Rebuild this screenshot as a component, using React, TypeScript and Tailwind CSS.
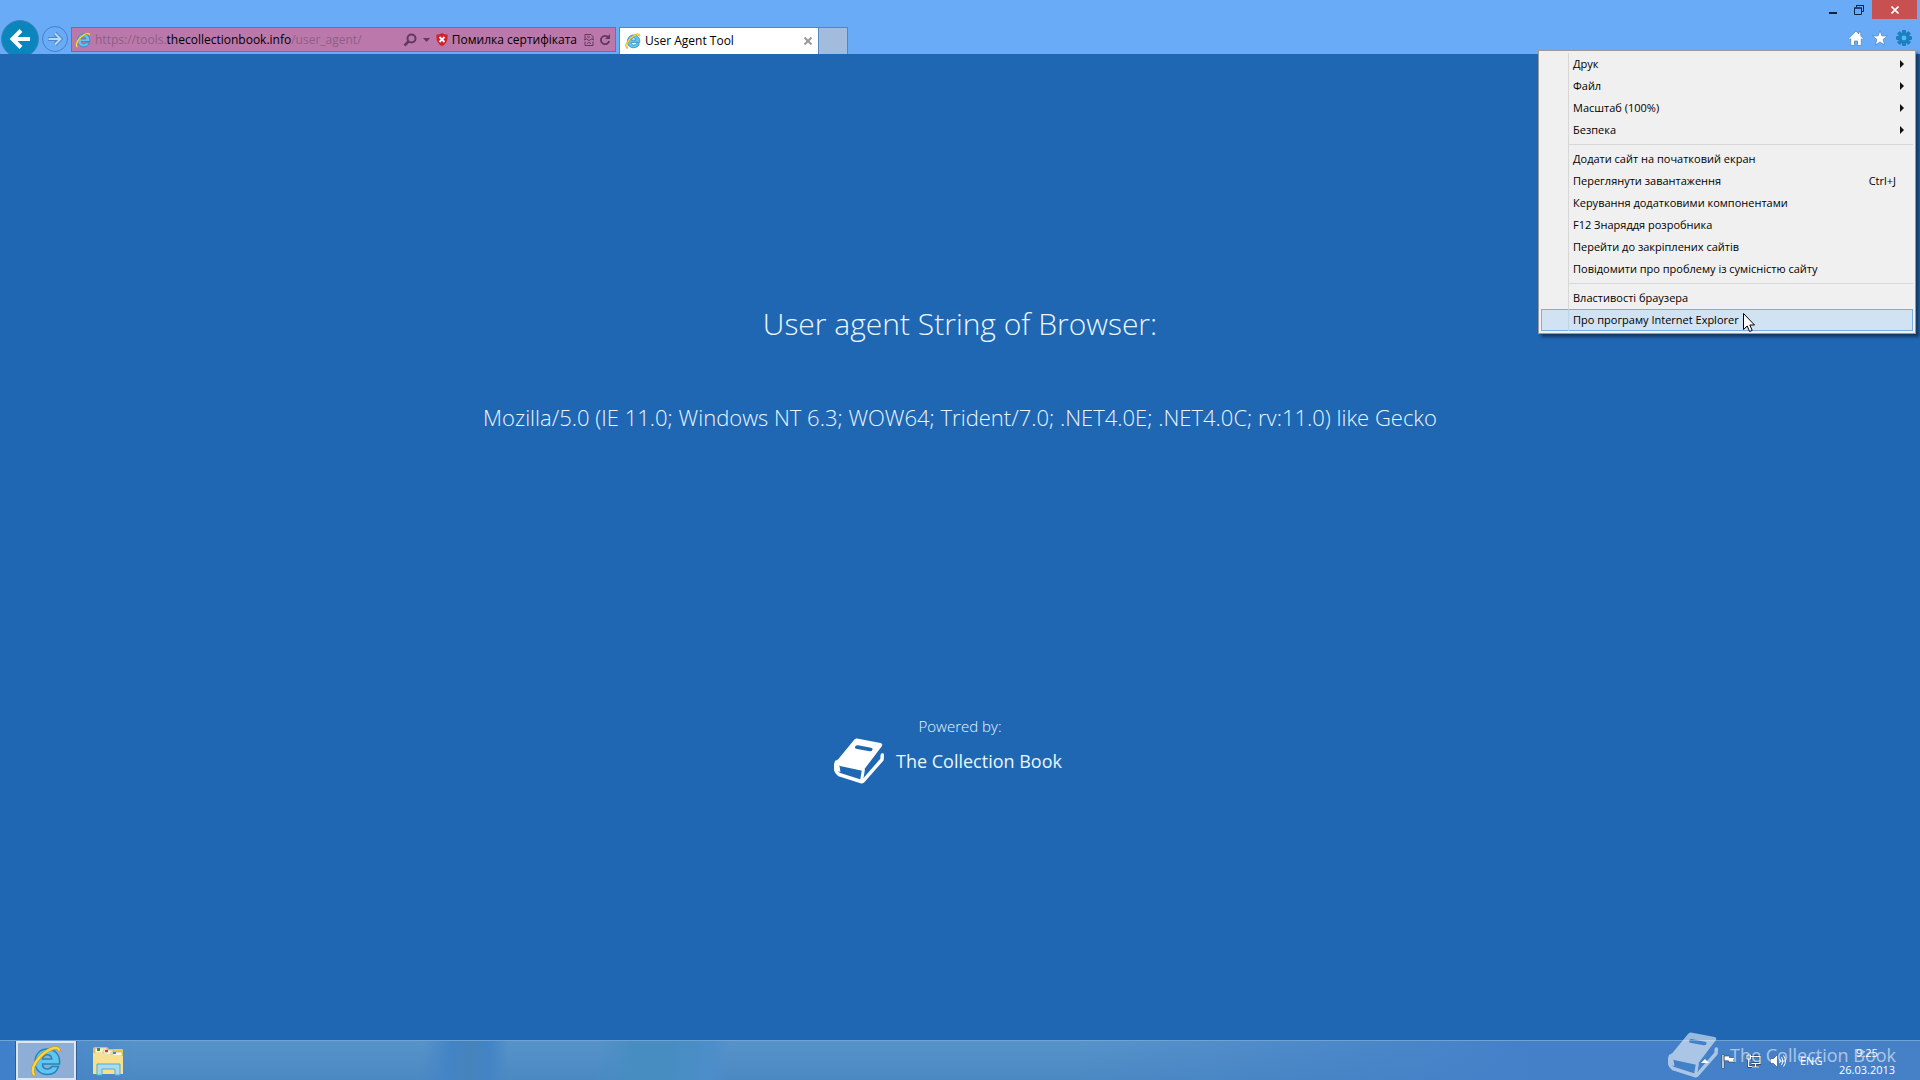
import React, { useState } from "react";

type MenuItem = { label: string; hint?: string; submenu?: boolean };

const menuGroups: MenuItem[][] = [
  [
    { label: "Друк", submenu: true },
    { label: "Файл", submenu: true },
    { label: "Масштаб (100%)", submenu: true },
    { label: "Безпека", submenu: true },
  ],
  [
    { label: "Додати сайт на початковий екран" },
    { label: "Переглянути завантаження", hint: "Ctrl+J" },
    { label: "Керування додатковими компонентами" },
    { label: "F12 Знаряддя розробника" },
    { label: "Перейти до закріплених сайтів" },
    { label: "Повідомити про проблему із сумісністю сайту" },
  ],
  [{ label: "Властивості браузера" }, { label: "Про програму Internet Explorer" }],
];

function IeLogo({ className }: { className?: string }) {
  return (
    <svg viewBox="0 0 32 32" className={className} aria-hidden="true">
      <path
        d="M17 4C9.500 4 5 10 5 17c0 7.500 5 12.500 12.500 12.500 5.500 0 9.500-2.800 11-8H22c-1 1.700-2.500 2.500-4.500 2.500-3 0-5-2-5-5h17C30.500 10 25 4 17 4zm-4.500 10c.6-2.700 2.300-4.200 4.800-4.200s4.200 1.500 4.500 4.200z"
        fill="#5fc6f0"
        stroke="#2384bd"
        strokeWidth="1.5"
      />
      <path
        d="M4 29.500C-.5 24 8 11.500 18 5.500c5.500-3.300 10-3.500 11-.5"
        fill="none"
        stroke="#c99a1c"
        strokeWidth="3.600"
        strokeLinecap="round"
      />
      <path
        d="M4 29.500C-.5 24 8 11.500 18 5.500c5.500-3.300 10-3.500 11-.5"
        fill="none"
        stroke="#f9d74a"
        strokeWidth="2.200"
        strokeLinecap="round"
      />
    </svg>
  );
}

function BookLogo({ className }: { className?: string }) {
  return (
    <svg viewBox="0 0 50 46" className={className} fill="currentColor" aria-hidden="true">
      <path
        fillRule="evenodd"
        d="M23 .5 46.500 5q2.500.7 1.500 3L30.500 31q-1.500 1.800-3.500 1.400L6 28Q1.500 25.500 4 21.500L20 2q1.200-1.800 3-1.500zM21.500 8q-1.200 2 .5 2.700l13.500 2.600q2.500.2 3-1.600.5-1.500-1.500-2L24 7.200q-1.700-.3-2.500.8z"
      />
      <path
        d="M2.500 24C.8 29 1.500 34 5 36.500L27 43.500q1.500.5 2.500-.8L48 21.500l.3-4.500"
        fill="none"
        stroke="currentColor"
        strokeWidth="3.500"
        strokeLinejoin="round"
        strokeLinecap="round"
      />
      <path d="M4 21 1.500 25q-1 5 1.500 8l3.500 1-1.200-7z" />
      <path d="M29.500 31 27.500 43" stroke="currentColor" strokeWidth="3" />
    </svg>
  );
}

function Gear() {
  return (
    <svg viewBox="0 0 16 16" className="size-4" aria-hidden="true">
      <g fill="#1c7fc0">
        {[0, 45, 90, 135].map((a) => (
          <rect key={a} x="6" y="0" width="4" height="16" rx="1" transform={`rotate(${a} 8 8)`} />
        ))}
        <circle cx="8" cy="8" r="5.500" />
      </g>
      <circle cx="8" cy="8" r="2.400" fill="#4fc0ee" />
    </svg>
  );
}

function AddressBar() {
  return (
    <div className="flex h-[25px] w-[545px] items-center border border-[#a4568e] bg-[#bb78aa] pl-[3px] pr-1">
      <IeLogo className="size-4 shrink-0" />
      <label className="relative ml-1 flex-1 cursor-text whitespace-nowrap text-[#8d6088]">
        https://tools.<span className="text-black">thecollectionbook.info</span>/user_agent/
        <input
          type="text"
          aria-label="Адреса"
          className="absolute inset-0 w-full bg-transparent outline-none"
        />
      </label>
      <button aria-label="Пошук" className="mr-1">
        <svg viewBox="0 0 14 14" className="size-[14px]" fill="none" stroke="#61395e">
          <circle cx="8.500" cy="5.500" r="4" strokeWidth="2" />
          <path d="M5.500 8.500 1.500 12.500" strokeWidth="2.500" />
        </svg>
      </button>
      <button aria-label="Автозаповнення" className="mr-1 p-[2px]">
        <svg viewBox="0 0 7 4" className="h-1 w-[7px]">
          <path d="M0 0h7L3.500 4z" fill="#61395e" />
        </svg>
      </button>
      <button className="flex items-center gap-1 whitespace-nowrap text-black">
        <svg viewBox="0 0 12 13" className="h-[13px] w-3" aria-hidden="true">
          <path d="M6 0q3 1.800 5.500 1.500Q12.500 10 6 13-.5 10 .5 1.500 3 1.800 6 0z" fill="#d3202b" />
          <path d="m3.500 4 5 5m0-5-5 5" stroke="#fff" strokeWidth="1.800" />
        </svg>
        Помилка сертифіката
      </button>
      <button aria-label="Режим сумісності" className="ml-[7px]">
        <svg viewBox="0 0 10 12" className="h-3 w-[10px]" fill="none" stroke="#61395e">
          <path d="M1 5V.5h6L9 2.500V5M1 7.500v4h8v-4M3 3h3M0 6l2.500-1L5 6.500 7.500 5 10 6M3 9.500l2-1 2 1" />
        </svg>
      </button>
      <button aria-label="Оновити" className="ml-[5px]">
        <svg viewBox="0 0 12 12" className="size-3">
          <path d="M9.500 3.500A4.200 4.200 0 1 0 10.200 7" fill="none" stroke="#61395e" strokeWidth="1.800" />
          <path d="M11 0v5H6z" fill="#61395e" />
        </svg>
      </button>
    </div>
  );
}

function Toolbar() {
  return (
    <header className="flex h-[54px] justify-between overflow-hidden bg-[#6aabf7] text-xs">
      <div className="flex items-end">
        <button
          aria-label="Назад"
          className="-mb-1 ml-[1px] flex size-[38px] items-center justify-center rounded-full border border-[#3f83b8] bg-[#0a86bd]"
        >
          <svg viewBox="0 0 22 20" className="h-5 w-[22px]" fill="none" stroke="#fff" strokeWidth="4">
            <path d="M21 10H4M12 1.500 3.500 10l8.500 8.500" />
          </svg>
        </button>
        <button
          aria-label="Вперед"
          className="mb-[2px] ml-[3px] mr-[3px] flex size-[26px] items-center justify-center rounded-full border border-[#4580c4]"
        >
          <svg viewBox="0 0 16 14" className="h-[14px] w-4" fill="none">
            <path d="M1 7h12M8 1.500 13.500 7 8 12.500" stroke="#4d86c4" strokeWidth="4" />
            <path d="M1.500 7h12M8 1.500 13.500 7 8 12.500" stroke="#b5d8fb" strokeWidth="2" />
          </svg>
        </button>
        <div className="mb-[2px]">
          <AddressBar />
        </div>
        <div className="ml-[3px] flex h-[27px] w-[200px] items-center border-x border-t border-[#5585bd] bg-white pl-[5px] pr-[6px]">
          <button role="tab" aria-selected="true" className="flex flex-1 items-center gap-1 text-black">
            <IeLogo className="size-4" />
            User Agent Tool
          </button>
          <button aria-label="Закрити вкладку">
            <svg viewBox="0 0 8 8" className="size-2">
              <path d="m0.500.5 7 7m0-7-7 7" stroke="#999" strokeWidth="2" />
            </svg>
          </button>
        </div>
        <button
          aria-label="Нова вкладка"
          className="h-[27px] w-[29px] border-r border-t border-[#5585bd] bg-[#a3bcdd]"
        />
      </div>

      <div className="flex flex-col items-end">
        <div className="mr-[3px] flex h-[19px]">
          <button aria-label="Згорнути" className="flex w-[26px] items-center justify-center">
            <svg viewBox="0 0 8 8" className="size-2">
              <path d="M0 6h8v2H0z" fill="#10233c" />
            </svg>
          </button>
          <button aria-label="Розгорнути" className="flex w-[26px] items-center justify-center">
            <svg viewBox="0 0 10 10" className="size-[10px]" fill="none" stroke="#10233c">
              <path d="M.5 3h7v6.500h-7zM0 3h8M2.500 2V.5h7v6H8M2 .5h8" />
            </svg>
          </button>
          <button aria-label="Закрити" className="flex w-[45px] items-center justify-center bg-[#c75050]">
            <svg viewBox="0 0 8 8" className="size-2">
              <path d="m.5.5 7 7m0-7-7 7" stroke="#fff" strokeWidth="1.600" />
            </svg>
          </button>
        </div>
        <div className="mr-2 mt-[11px] flex items-center gap-2">
          <button aria-label="Домашня сторінка">
            <svg viewBox="0 0 16 16" className="size-4" fill="#fff" stroke="#4a7fb8" strokeWidth=".7">
              <path d="M8 1 .7 8.500l1.100 1.100.9-.8V15.500h3.800V11h3v4.500h3.800V8.800l.9.800 1.100-1.100L12.800 6V2h-2v2z" />
            </svg>
          </button>
          <button aria-label="Вибране">
            <svg viewBox="0 0 16 16" className="size-4" fill="#fff" stroke="#4a7fb8" strokeWidth=".7">
              <path d="m8 .6 1.900 5.200 5.600.200-4.400 3.500 1.500 5.600L8 12l-4.600 3.100 1.500-5.600L.5 6l5.600-.2z" />
            </svg>
          </button>
          <button aria-label="Знаряддя">
            <Gear />
          </button>
        </div>
      </div>
    </header>
  );
}

function ToolsMenu({ active }: { active: string }) {
  return (
    <div
      role="menu"
      className="absolute right-1 top-[50px] w-[378px] border border-[#9a9a9a] bg-[#f0f0f0] p-[2px] text-[11px] text-black shadow-[3px_3px_3px_rgba(0,0,0,0.45)]"
    >
      {menuGroups.map((group, index) => (
        <div key={index} role="group">
          {index > 0 && (
            <div className="flex h-[7px] items-center">
              <div className="h-full w-[28px] border-r border-[#d7d7d7]" />
              <div className="h-px flex-1 bg-[#d7d7d7]" />
            </div>
          )}
          {group.map((item) => (
            <button
              key={item.label}
              role="menuitem"
              className={`flex h-[22px] w-full items-stretch border ${
                item.label === active ? "border-[#78aee5] bg-[#d1e2f2]" : "border-transparent"
              }`}
            >
              <span
                className={`-my-px w-[27px] border-r ${
                  item.label === active ? "border-[#bdd3e8]" : "border-[#d7d7d7]"
                }`}
              />
              <span className="ml-1 flex flex-1 items-center">{item.label}</span>
              {item.hint && <span className="mr-4 flex items-center">{item.hint}</span>}
              {item.submenu && (
                <svg viewBox="0 0 4 8" className="mr-2 h-2 w-1 self-center" aria-hidden="true">
                  <path d="M0 0v8l4-4z" fill="#111" />
                </svg>
              )}
            </button>
          ))}
        </div>
      ))}
      <svg viewBox="0 0 12 19" className="absolute bottom-px right-40 h-[19px] w-3" aria-hidden="true">
        <path
          d="M.5.500v16l3.700-3.500 2.400 5.500 2.600-1.100L6.800 12h4.700z"
          fill="#fff"
          stroke="#000"
        />
      </svg>
    </div>
  );
}

function Taskbar() {
  return (
    <footer className="relative flex h-10 items-stretch justify-between overflow-hidden border-t border-[#6ea3d4] bg-linear-to-b from-[#5793ca] to-[#4b89c3]">
      <div className="absolute inset-0 bg-[linear-gradient(95deg,#3f7fcb_0%,transparent_7%,transparent_22%,#4384c6_23.500%,#4583bb_24.500%,#4384c6_25.500%,transparent_26.500%,transparent_31%,#478dc2_33%,#478dc2_35%,#4c8ec9_37%,transparent_38%,transparent_56%,#4380c8_80%,#4680c7_100%)]" />
      <div className="relative flex items-center">
        <button
          aria-label="Internet Explorer"
          className="ml-4 flex h-[39px] w-[60px] items-center justify-center border-2 border-[#dde7f3] bg-[#8eaed6] outline outline-[#2f5c93]"
        >
          <IeLogo className="size-8" />
        </button>
        <button aria-label="Провідник" className="ml-4">
          <svg viewBox="0 0 32 30" className="h-[30px] w-8">
            <path d="M1 28V3q0-2 2-2h12l2 2h13q1 0 1 1v24z" fill="#eac95a" />
            <path d="M3 2h12v5H3zM11 4h10v5H11zM19 6h11v4H19z" fill="#fdf6e3" stroke="#b99a52" strokeWidth=".5" />
            <path d="M5 2h3v3H5z" fill="#21a038" />
            <path d="M13 4h3v2h-3z" fill="#c8442f" />
            <path d="M21 6h3v2h-3z" fill="#2d8fd0" />
            <path d="M1 7h10l2 2h8l1 1h9v18H1z" fill="#f7e08e" />
            <path d="M5 29V18h23v11h-5v-6H10v6z" fill="#a7dcf3" stroke="#57a9d0" />
          </svg>
        </button>
      </div>

      <div className="relative flex items-center pt-px text-[11px] text-white">
        <button aria-label="Приховані піктограми" className="mr-3">
          <svg viewBox="0 0 8 4" className="h-1 w-2">
            <path d="M0 4 4 0l4 4z" fill="#fff" />
          </svg>
        </button>
        <button aria-label="Центр підтримки" className="mr-[10px]">
          <svg viewBox="0 0 15 15" className="size-[15px]" fill="#fff" stroke="#23415f" strokeWidth=".6">
            <path d="M1 .5h2V14.500H1zM3 2h5.500v1.500H14l-1.500 2.500L14 8H7.500V6.800H3z" />
          </svg>
        </button>
        <button aria-label="Мережа" className="mr-[9px]">
          <svg viewBox="0 0 15 14" className="h-[14px] w-[15px]" fill="none">
            <path d="M5 2.500h9v7H5.500M9.500 9.500v3M6 13h7M1 1h3.500v4H1zM2.700 5v7.500H6" stroke="#23415f" strokeWidth="2.400" />
            <path d="M5 2.500h9v7H5.500M9.500 9.500v3M6 13h7M1 1h3.500v4H1zM2.700 5v7.500H6" stroke="#fff" strokeWidth="1.200" />
          </svg>
        </button>
        <button aria-label="Гучність" className="mr-[14px]">
          <svg viewBox="0 0 16 14" className="h-[14px] w-4">
            <path d="M.5 4.500h3L7.500.5v13l-4-4h-3z" fill="#fff" stroke="#23415f" strokeWidth=".6" />
            <path d="M9.500 5q1.500 2 0 4M11.500 3q3 4 0 8M13.500 1.500q4 5.500 0 11" fill="none" stroke="#fff" />
          </svg>
        </button>
        <button className="w-[22px]">ENG</button>
        <button className="ml-[17px] mr-[25px] w-[56px] whitespace-nowrap text-center leading-[17px]">
          9:25
          <br />
          26.03.2013
        </button>
      </div>
    </footer>
  );
}

export default function App() {
  const [active] = useState("Про програму Internet Explorer");

  return (
    <div className="relative flex min-h-screen flex-col bg-[#1f67b3] font-['Open_Sans','Noto_Sans',sans-serif]">
      <Toolbar />
      <main className="flex flex-1 flex-col items-center pt-[250px] font-light text-[#e9f6ff]">
        <h1 className="text-[30px] leading-10">User agent String of Browser:</h1>
        <p className="mt-[57px] text-[22px] leading-8">
          Mozilla/5.0 (IE 11.0; Windows NT 6.3; WOW64; Trident/7.0; .NET4.0E; .NET4.0C; rv:11.0) like Gecko
        </p>
        <p className="mt-[281px] text-[15px] leading-6">Powered by:</p>
        <a href="#" className="mr-6 flex items-center gap-3 font-normal">
          <BookLogo className="h-[46px] w-[50px] text-white" />
          <span className="text-[18px]">The Collection Book</span>
        </a>
      </main>
      <Taskbar />
      <div className="pointer-events-none absolute bottom-[2px] right-6 flex items-center gap-3 text-white opacity-55">
        <BookLogo className="h-[46px] w-[50px]" />
        <span className="text-[18px]">The Collection Book</span>
      </div>
      <ToolsMenu active={active} />
    </div>
  );
}
